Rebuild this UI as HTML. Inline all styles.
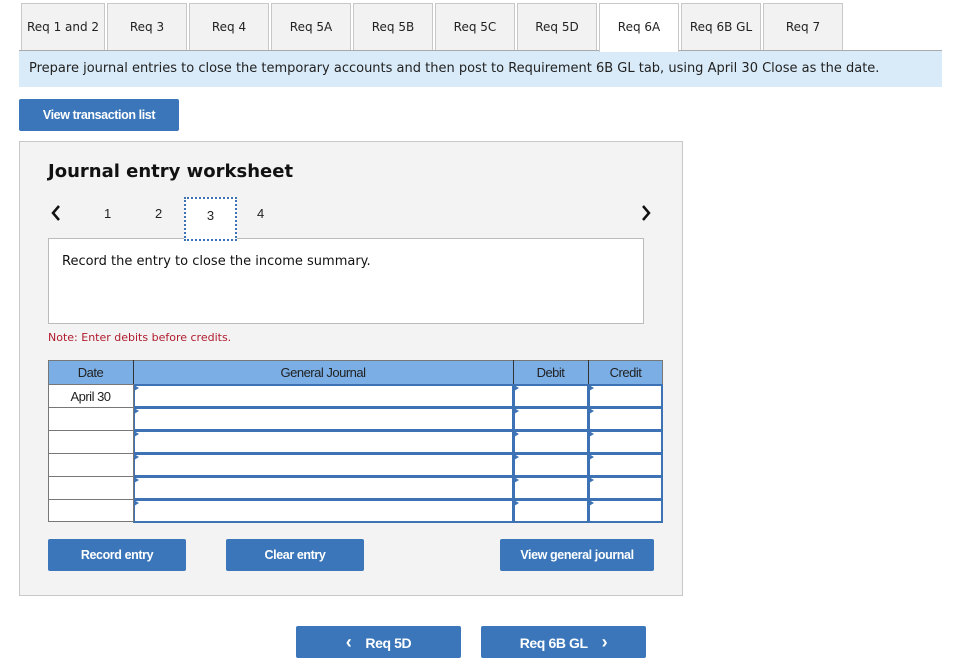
<!DOCTYPE html>
<html><head><style>
*{margin:0;padding:0;box-sizing:border-box}
body{width:966px;height:666px;background:#fff;position:relative;font-family:"DejaVu Sans","Liberation Sans",sans-serif;color:#222;overflow:hidden}
.a{position:absolute}
.tab{position:absolute;top:3px;height:48px;width:80px;background:#f2f2f2;border:1px solid #c8c8c8;border-bottom:none;font-size:12px;text-align:center;line-height:46px;color:#222}
.btn{position:absolute;background:#3a76b9;color:#fff;font-family:"Liberation Sans",sans-serif;font-weight:bold;font-size:12.5px;text-align:center;border-radius:2px;letter-spacing:-0.4px}
.inp{position:absolute;background:#fff;border:2px solid #3d73b4}
.inp:before{content:"";position:absolute;left:-1px;top:-1px;border-left:5px solid #3d73b4;border-top:3px solid transparent;border-bottom:3px solid transparent}
.th{position:absolute;top:365px;text-align:center;font-family:'Liberation Sans';font-size:13px;color:#222;letter-spacing:-0.5px}
</style></head><body>
<div class="tab" style="left:21px;width:84px">Req 1 and 2</div>
<div class="tab" style="left:107px">Req 3</div>
<div class="tab" style="left:189px">Req 4</div>
<div class="tab" style="left:271px">Req 5A</div>
<div class="tab" style="left:353px">Req 5B</div>
<div class="tab" style="left:435px">Req 5C</div>
<div class="tab" style="left:517px">Req 5D</div>
<div class="tab" style="left:599px;background:#fff;height:49px;z-index:2">Req 6A</div>
<div class="tab" style="left:681px">Req 6B GL</div>
<div class="tab" style="left:763px">Req 7</div>
<div class="a" style="left:19px;top:50px;width:923px;height:1px;background:#aaa"></div>
<div class="a" style="left:19px;top:51px;width:923px;height:36px;background:#d9ebf8;font-size:13px;line-height:36px;padding-left:10px;color:#222;white-space:nowrap">Prepare journal entries to close the temporary accounts and then post to Requirement 6B GL tab, using April 30 Close as the date.</div>
<div class="btn" style="left:19px;top:99px;width:160px;height:32px;line-height:32px">View transaction list</div>

<div class="a" style="left:19px;top:141px;width:664px;height:455px;background:#f3f3f3;border:1px solid #c8c8c8"></div>
<div class="a" style="left:48px;top:161px;font-size:18px;font-weight:bold;color:#111">Journal entry worksheet</div>
<svg class="a" style="left:50px;top:204px" width="12" height="18"><path d="M9 2 L3 9 L9 16" stroke="#111" stroke-width="2.5" fill="none"/></svg>
<svg class="a" style="left:640px;top:204px" width="12" height="18"><path d="M3 2 L9 9 L3 16" stroke="#111" stroke-width="2.5" fill="none"/></svg>
<div class="a" style="left:104px;top:206px;font-family:'Liberation Sans';font-size:13px">1</div>
<div class="a" style="left:155px;top:206px;font-family:'Liberation Sans';font-size:13px">2</div>
<div class="a" style="left:184px;top:197px;width:53px;height:44px;background:#fff;border:2px dotted #3d73b4;z-index:2;font-family:'Liberation Sans';font-size:13px;text-align:center;line-height:34px">3</div>
<div class="a" style="left:257px;top:206px;font-family:'Liberation Sans';font-size:13px">4</div>
<div class="a" style="left:48px;top:238px;width:596px;height:86px;background:#fff;border:1px solid #bbb;font-size:13px;padding:15px 0 0 13px;color:#111">Record the entry to close the income summary.</div>
<div class="a" style="left:48px;top:331px;font-size:11px;color:#b01c2e">Note: Enter debits before credits.</div>

<div class="a" style="left:48px;top:360px;width:615px;height:25px;background:#7aaee5;border:1px solid #777"></div>
<div class="a" style="left:133px;top:360px;width:1px;height:25px;background:#333"></div>
<div class="a" style="left:513px;top:360px;width:1px;height:25px;background:#333"></div>
<div class="a" style="left:588px;top:360px;width:1px;height:25px;background:#333"></div>
<div class="th" style="left:48px;width:85px">Date</div>
<div class="th" style="left:133px;width:380px">General Journal</div>
<div class="th" style="left:513px;width:75px">Debit</div>
<div class="th" style="left:588px;width:75px">Credit</div>
<div class="a" style="left:48px;top:384px;width:615px;height:138px;background:#fff;border:1px solid #777"></div>
<div id="rows"></div>
<div class="th" style="top:389px;left:48px;width:85px">April 30</div>
<script>
var h='';for(var i=0;i<6;i++){var y=384+i*23;
if(i>0)h+='<div class="a" style="left:48px;top:'+y+'px;width:86px;height:1px;background:#777"></div>';
h+='<div class="inp" style="left:133px;top:'+y+'px;width:381px;height:24px"></div>';
h+='<div class="inp" style="left:513px;top:'+y+'px;width:76px;height:24px"></div>';
h+='<div class="inp" style="left:588px;top:'+y+'px;width:75px;height:24px"></div>';}
document.getElementById('rows').innerHTML=h;
</script>
<div class="a" style="left:133px;top:384px;width:1px;height:138px;background:#777"></div>

<div class="btn" style="left:48px;top:539px;width:138px;height:32px;line-height:32px">Record entry</div>
<div class="btn" style="left:226px;top:539px;width:138px;height:32px;line-height:32px">Clear entry</div>
<div class="btn" style="left:500px;top:539px;width:154px;height:32px;line-height:32px">View general journal</div>

<div class="btn" style="left:296px;top:626px;width:165px;height:32px;line-height:32px;font-size:14px"><span style="margin-right:14px;font-size:18px">&lsaquo;</span>Req 5D</div>
<div class="btn" style="left:481px;top:626px;width:165px;height:32px;line-height:32px;font-size:14px">Req 6B GL<span style="margin-left:14px;font-size:18px">&rsaquo;</span></div>
</body></html>
